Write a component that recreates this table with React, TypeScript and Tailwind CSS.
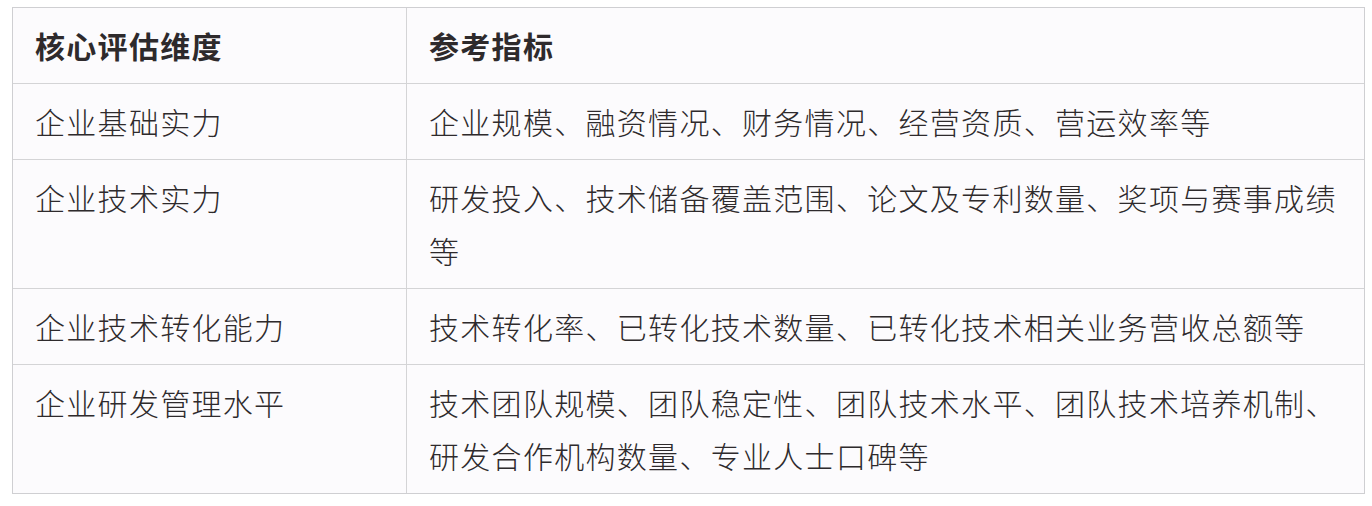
import React from 'react'

// Evaluation dimensions table
const rows: { dim: string; refs: string[] }[] = [
  { dim: '企业基础实力', refs: ['企业规模、融资情况、财务情况、经营资质、营运效率等'] },
  { dim: '企业技术实力', refs: ['研发投入、技术储备覆盖范围、论文及专利数量、奖项与赛事成绩', '等'] },
  { dim: '企业技术转化能力', refs: ['技术转化率、已转化技术数量、已转化技术相关业务营收总额等'] },
  {
    dim: '企业研发管理水平',
    refs: ['技术团队规模、团队稳定性、团队技术水平、团队技术培养机制、', '研发合作机构数量、专业人士口碑等'],
  },
]

const cell = 'px-[22px] py-[11px] leading-[53px] whitespace-nowrap'

export default function App() {
  return (
    <div className="w-[1372px] h-[506px] bg-white pt-[7px] pl-[12px] overflow-hidden font-['Noto_Sans_CJK_SC',sans-serif] text-[30px] tracking-[1.3px] text-[#2e2a2c]">
      <div className="w-[1353px] grid grid-cols-[394px_1fr] border border-[#cfcfd2] bg-[#fcfbfd]">
        <div className={`${cell} font-bold border-r border-[#d4d4d6]`}>核心评估维度</div>
        <div className={`${cell} font-bold`}>参考指标</div>
        {rows.map((r) => (
          <React.Fragment key={r.dim}>
            <div className={`${cell} font-light border-t border-r border-[#d4d4d6]`}>{r.dim}</div>
            <div className={`${cell} font-light border-t border-[#d4d4d6]`}>
              {r.refs.map((line) => (
                <div key={line}>{line}</div>
              ))}
            </div>
          </React.Fragment>
        ))}
      </div>
    </div>
  )
}
